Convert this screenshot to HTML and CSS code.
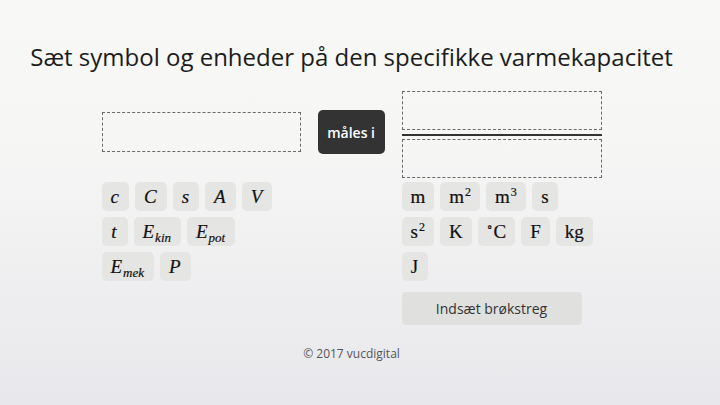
FILE: index.html
```html
<!DOCTYPE html>
<html lang="da">
<head>
<meta charset="utf-8">
<title>Specifik varmekapacitet</title>
<link rel="stylesheet" href="styles.css">
</head>
<body>
<div class="page">
  <h1 class="title">Sæt symbol og enheder på den specifikke varmekapacitet</h1>
  <div class="workspace">
    <div class="top-row">
      <div class="drop drop-symbol"></div>
      <button class="measure">måles i</button>
      <div class="fraction">
        <div class="drop drop-unit"></div>
        <div class="fraction-line"></div>
        <div class="drop drop-unit"></div>
      </div>
    </div>
    <div class="bottom-row">
      <div class="palette symbols">
        <div class="chip-row">
          <span class="chip"><i>c</i></span>
          <span class="chip"><i>C</i></span>
          <span class="chip"><i>s</i></span>
          <span class="chip"><i>A</i></span>
          <span class="chip"><i>V</i></span>
        </div>
        <div class="chip-row">
          <span class="chip"><i>t</i></span>
          <span class="chip"><i>E</i><sub>kin</sub></span>
          <span class="chip"><i>E</i><sub>pot</sub></span>
        </div>
        <div class="chip-row">
          <span class="chip"><i>E</i><sub>mek</sub></span>
          <span class="chip"><i>P</i></span>
        </div>
      </div>
      <div class="spacer"></div>
      <div class="units-col">
        <div class="palette units">
          <div class="chip-row">
            <span class="chip">m</span>
            <span class="chip">m<sup>2</sup></span>
            <span class="chip">m<sup>3</sup></span>
            <span class="chip">s</span>
          </div>
          <div class="chip-row">
            <span class="chip">s<sup>2</sup></span>
            <span class="chip">K</span>
            <span class="chip"><sup class="deg">∘</sup>C</span>
            <span class="chip">F</span>
            <span class="chip">kg</span>
          </div>
          <div class="chip-row">
            <span class="chip">J</span>
          </div>
        </div>
        <button class="fraction-btn">Indsæt brøkstreg</button>
      </div>
    </div>
  </div>
  <footer class="footer">© 2017 vucdigital</footer>
</div>
</body>
</html>
```

FILE: styles.css
```css
html, body {
  margin: 0;
  padding: 0;
  height: 100%;
}
body {
  background: linear-gradient(to bottom, #f8f8f6 0%, #f6f6f5 35%, #e8e8ec 100%);
  font-family: "Open Sans", "Liberation Sans", sans-serif;
  color: #222;
  overflow: hidden;
}
.page {
  width: 703px;
  display: flex;
  flex-direction: column;
  align-items: center;
}
.title {
  margin: 40px 0 0;
  font-size: 24px;
  font-weight: 400;
  line-height: 34px;
  color: #1c1c1c;
  text-align: center;
}
.workspace {
  margin-top: 17px;
  width: 500px;
  display: flex;
  flex-direction: column;
}
.top-row {
  display: flex;
  align-items: center;
  gap: 17px;
}
.drop {
  box-sizing: border-box;
  width: 200px;
  border: 1px dashed #6a6a6a;
}
.drop-symbol {
  height: 40px;
  margin-bottom: 5px;
}
.measure {
  box-sizing: border-box;
  width: 67px;
  height: 44px;
  margin-bottom: 5px;
  border: none;
  border-radius: 5px;
  background: #333333;
  color: #fff;
  font-family: "Open Sans", "Liberation Sans", sans-serif;
  font-size: 14px;
  font-weight: 600;
  padding: 0;
}
.fraction {
  display: flex;
  flex-direction: column;
}
.drop-unit {
  height: 39px;
}
.fraction-line {
  height: 2px;
  background: #333;
  margin: 4px 0 3px;
}
.bottom-row {
  display: flex;
  margin-top: 4px;
}
.spacer {
  width: 100px;
}
.palette {
  width: 200px;
  display: flex;
  flex-direction: column;
  gap: 6px;
}
.chip-row {
  display: flex;
  gap: 6px;
}
.chip {
  box-sizing: border-box;
  display: inline-block;
  height: 29px;
  min-width: 26px;
  padding: 0 9px;
  border-radius: 5px;
  background: #e5e5e3;
  text-align: center;
  font-family: "Liberation Serif", "DejaVu Serif", serif;
  font-size: 19px;
  line-height: 29px;
  color: #111;
  white-space: nowrap;
  -webkit-text-stroke: 0.2px #111;
}
.chip i {
  font-style: italic;
  padding-right: 1px;
}
.chip sub {
  font-size: 13px;
  font-style: italic;
  vertical-align: -4px;
  line-height: 0;
  padding-right: 1px;
}
.chip sup {
  font-size: 12px;
  vertical-align: 7px;
  line-height: 0;
  margin-left: 1px;
}
.chip sup.deg {
  margin: 0 1px 0 0;
}
.units-col {
  display: flex;
  flex-direction: column;
  width: 200px;
}
.fraction-btn {
  margin-top: 11px;
  width: 180px;
  height: 33px;
  border: none;
  border-radius: 4px;
  background: #e0e0df;
  color: #333;
  font-family: "Open Sans", "Liberation Sans", sans-serif;
  font-size: 14px;
  padding: 0;
}
.footer {
  margin-top: 20px;
  font-size: 12px;
  color: #555;
}
```
